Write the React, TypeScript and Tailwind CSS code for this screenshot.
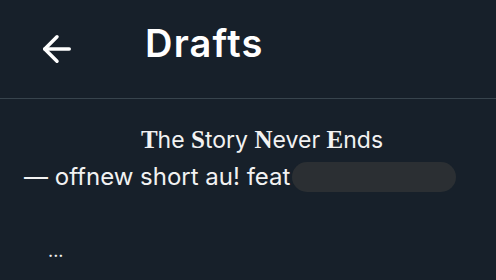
import { ArrowLeft } from "lucide-react";

function Cap({ c }: { c: string }) {
  return <span className="font-bold text-[25px]" style={{ fontFamily: '"Liberation Serif", serif' }}>{c}</span>;
}

export default function App() {
  return (
    <div className="w-[496px] h-[280px] bg-[#17202a] text-white overflow-hidden font-['Inter',sans-serif]">
      <div className="flex items-center h-[99px] border-b border-[#38444d]">
        <div className="pl-[36px] w-[145px]">
          <ArrowLeft size={42} strokeWidth={2} />
        </div>
        <h2 className="text-[38px] font-semibold tracking-[1.2px] -mt-[12px]">Drafts</h2>
      </div>
      <div className="pt-[27px] pl-[24px] text-[#f2f2f2]">
        <p className="text-center pl-[4px] text-[23px] leading-[28px]">
          <Cap c="T" />he <Cap c="S" />tory <Cap c="N" />ever <Cap c="E" />nds
        </p>
        <div className="flex items-center mt-[8px] h-[30px]">
          <span className="text-[24px] leading-[30px] whitespace-nowrap">— offnew short au! feat</span>
          <span className="ml-[2px] w-[164px] h-[30px] rounded-full bg-[#2b2f33] blur-[0.5px]" />
        </div>
        <p className="pl-[24px] mt-[49px] text-[18px] leading-[20px]">...</p>
      </div>
    </div>
  );
}
